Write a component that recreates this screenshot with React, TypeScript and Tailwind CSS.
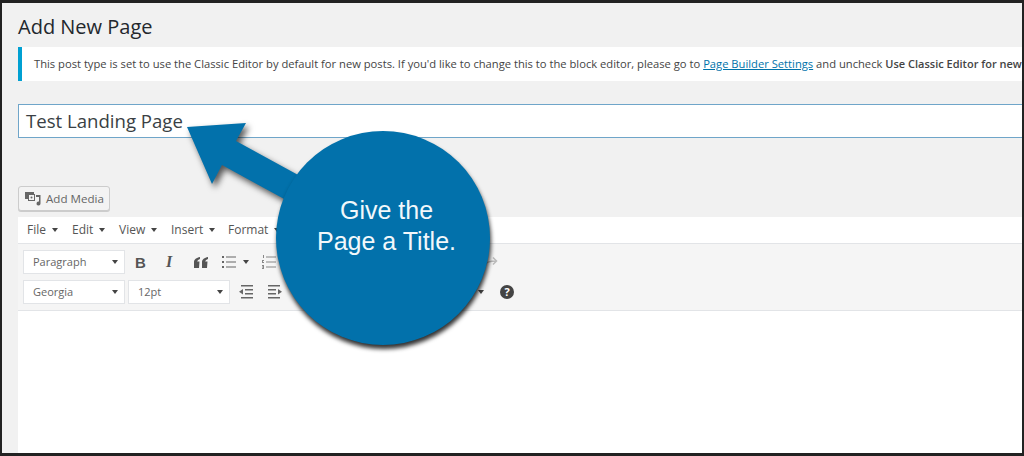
import React from 'react';

const font = 'font-["Open_Sans","Noto_Sans",sans-serif]';

const Caret = ({ className = '' }: { className?: string }) => (
  <span className={`inline-block w-0 h-0 border-x-[3.5px] border-x-transparent border-t-[4px] border-t-[#444] ${className}`} />
);

const MenuItem = ({ label, width }: { label: string; width: string }) => (
  <div className={`flex items-center gap-[6px] ${width}`}>
    <span>{label}</span>
    <Caret />
  </div>
);

const Select = ({ label, width }: { label: string; width: string }) => (
  <div className={`flex items-center justify-between h-[24px] pl-[9px] pr-[6px] bg-white border border-[#e2e4e7] text-[11px] text-[#666] ${width}`}>
    <span>{label}</span>
    <Caret />
  </div>
);

const MediaIcon = () => (
  <svg width="16" height="16" viewBox="0 0 16 16" fill="#666">
    <path d="M0 1h9v2h1v7H3V8H0V1zm4 3v5h5V4H4zm2.500 1.500a1 1 0 1 1 0 2 1 1 0 0 1 0-2z" fillRule="evenodd" />
    <path d="M11 4h4.500v8.500a2 2 0 1 1-1.500-1.900V6h-3z" />
  </svg>
);

const ListIcon = ({ className = '' }: { className?: string }) => (
  <svg className={className} width="14" height="14" viewBox="0 0 14 14" fill="#666">
    <path d="M0 1h2v2H0zM0 6h2v2H0zM0 11h2v2H0zM4 1.500h10v1H4zM4 6.500h10v1H4zM4 11.500h10v1H4z" />
  </svg>
);

const OrderedIcon = ({ className = '' }: { className?: string }) => (
  <svg className={className} width="14" height="14" viewBox="0 0 14 14" fill="#888">
    <path d="M1 0h1v3H1zM0 5h2v1H1v1h1v1H0zM0 10h2v4H0v-1h1v-.5H0v-1h1V11H0zM4 1.500h10v1H4zM4 6.500h10v1H4zM4 11.500h10v1H4z" />
  </svg>
);

const OutdentIcon = ({ className = '' }: { className?: string }) => (
  <svg className={className} width="15" height="14" viewBox="0 0 15 14" fill="#666">
    <path d="M2 0h12v1.500H2zM6 4h8v1.500H6zM6 8h8v1.500H6zM2 12h12v1.500H2zM4 4v5.500L0 6.800z" />
  </svg>
);

const IndentIcon = ({ className = '' }: { className?: string }) => (
  <svg className={className} width="15" height="14" viewBox="0 0 15 14" fill="#666">
    <path d="M0 0h12v1.500H0zM0 4h8v1.500H0zM0 8h8v1.500H0zM0 12h12v1.500H0zM10 4v5.500l4-2.700z" />
  </svg>
);

const QuoteIcon = () => (
  <svg className="ml-[14px]" width="14" height="11" viewBox="0 0 14 11" fill="#555">
    <path d="M6 0v2C4.500 2.500 3.500 3.500 3.200 4.500H5.500L5 11H0V5C0 2.500 2.500 .5 6 0zM14 0v2c-1.500.5-2.500 1.500-2.800 2.500H13.500L13 11H8V5c0-2.500 2.500-4.500 6-5z" />
  </svg>
);

const RedoIcon = ({ className = '' }: { className?: string }) => (
  <svg className={className} width="14" height="12" viewBox="0 0 14 12" fill="none" stroke="#bbb" strokeWidth="1.5">
    <path d="M1 9c1-3 4-4 11-4M9 1.500 12.500 5 9 8.500" />
  </svg>
);

const Callout = () => (
  <>
    <svg className="absolute left-0 top-0 drop-shadow-[3px_4px_3px_rgba(0,0,0,0.65)]" width="320" height="220" viewBox="0 0 320 220">
      <path d="M187 127 L246 123 L236 141 L300 176 L286 200 L222 165 L212 184 Z" fill="#0271ab" />
    </svg>
    <div className="absolute left-[276px] top-[131px] w-[214px] h-[214px] rounded-full bg-[#0271ab] shadow-[1px_4px_4px_rgba(0,0,0,0.8)] flex flex-col items-center pt-[64px] pl-[7px] text-[#f2f8fb] text-[25px] leading-[31px] font-['Liberation_Sans',sans-serif]">
      <span>Give the</span>
      <span>Page a Title.</span>
    </div>
  </>
);

export default function App() {
  return (
    <div className={`relative w-[1024px] h-[456px] overflow-hidden border-t-[3px] border-l-[2px] border-r-[2px] border-b-[3px] border-[#222] bg-[#f1f1f1] ${font}`}>
      <div className="pl-[16px] flex flex-col">
        <h1 className="h-[44px] pt-[8px] text-[20px] leading-[32px] text-[#23282d]">Add New Page</h1>
        <div className="h-[34px] flex items-center bg-white border-l-[4px] border-[#00a0d2] pl-[12px] text-[11.2px] text-[#444] whitespace-nowrap">
          <span>
            This post type is set to use the Classic Editor by default for new posts. If you'd like to change this to the block editor, please go to{' '}
            <span className="text-[#0073aa] underline">Page Builder Settings</span> and uncheck <b className="font-semibold text-[11px]">Use Classic Editor for new</b>
          </span>
        </div>
        <div className="mt-[23px] h-[34px] flex items-center bg-white border border-r-0 border-[#6fa5c9] pl-[7px] text-[18.6px] text-[#3a3f44]">Test Landing Page</div>
        <div className="mt-[48px] w-[92px] h-[25px] flex items-center gap-[5px] pl-[6px] bg-[#f3f3f3] border border-[#ccc] rounded-[3px] text-[11.6px] text-[#666] shadow-[0_1px_0_#ccc]">
          <MediaIcon />
          <span>Add Media</span>
        </div>
        <div className="mt-[6px] flex flex-col">
          <div className="h-[26px] flex items-center pl-[9px] bg-white text-[12px] text-[#555]">
            <MenuItem label="File" width="w-[45px]" />
            <MenuItem label="Edit" width="w-[47px]" />
            <MenuItem label="View" width="w-[52px]" />
            <MenuItem label="Insert" width="w-[57px]" />
            <MenuItem label="Format" width="w-[60px]" />
          </div>
          <div className="h-[68px] flex flex-col justify-center gap-[6px] pl-[5px] bg-[#f5f5f5] border-y border-[#e2e4e7]">
            <div className="flex items-center text-[#555]">
              <Select label="Paragraph" width="w-[102px]" />
              <b className="w-[14px] ml-[10px] text-[15px] leading-none font-['Liberation_Sans',sans-serif]">B</b>
              <i className="w-[14px] ml-[17px] text-[16px] font-bold leading-none font-['Liberation_Serif',serif]">I</i>
              <QuoteIcon />
              <ListIcon className="ml-[14px]" />
              <Caret className="ml-[7px]" />
              <OrderedIcon className="ml-[13px]" />
              <RedoIcon className="ml-[208px]" />
            </div>
            <div className="flex items-center gap-[3px] text-[#555]">
              <Select label="Georgia" width="w-[102px]" />
              <Select label="12pt" width="w-[102px]" />
              <OutdentIcon className="ml-[6px]" />
              <IndentIcon className="ml-[11px]" />
              <Caret className="ml-[192px]" />
              <span className="ml-[13px] w-[14px] h-[14px] rounded-full bg-[#444] text-white text-[11px] font-bold leading-[14px] text-center">?</span>
            </div>
          </div>
          <div className="h-[142px] bg-white" />
        </div>
      </div>
      <div className="absolute -left-[2px] -top-[3px]">
        <Callout />
      </div>
    </div>
  );
}
